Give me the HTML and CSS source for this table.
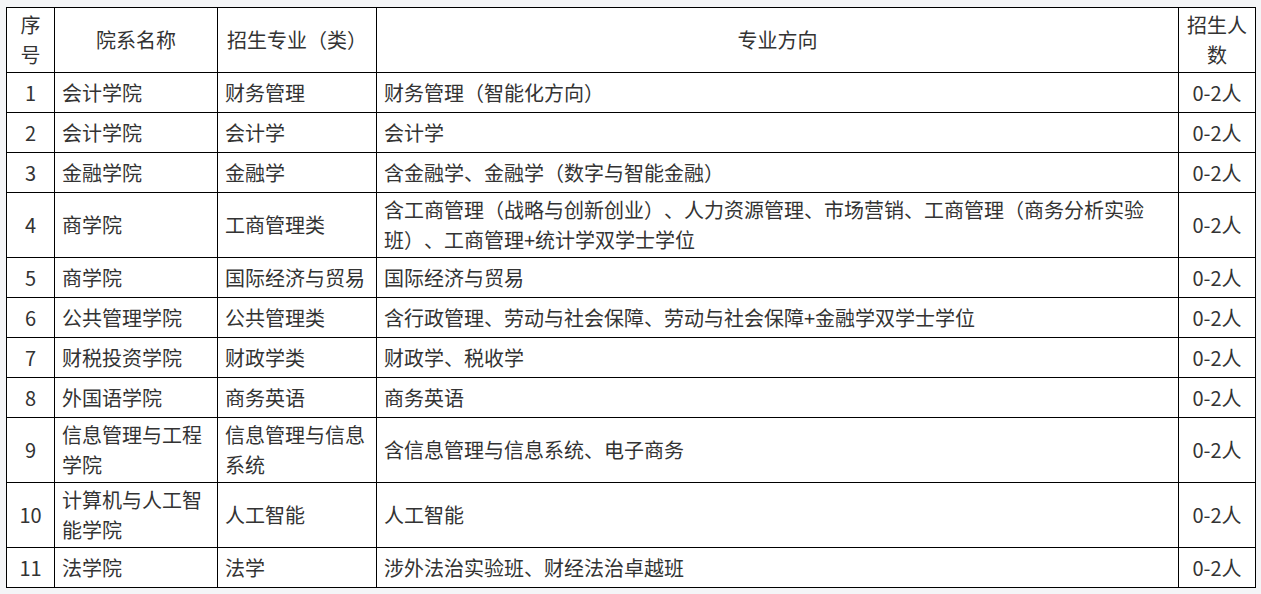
FILE: index.html
```html
<!DOCTYPE html>
<html lang="zh-CN">
<head>
<meta charset="utf-8">
<title>招生计划</title>
<link rel="stylesheet" href="styles.css">
</head>
<body>
<div class="wrap">
<table class="plan">
  <colgroup>
    <col class="c-no"><col class="c-dept"><col class="c-major"><col class="c-dir"><col class="c-num">
  </colgroup>
  <thead>
    <tr>
      <th>序号</th>
      <th>院系名称</th>
      <th>招生专业（类）</th>
      <th>专业方向</th>
      <th>招生人数</th>
    </tr>
  </thead>
  <tbody>
    <tr><td class="no">1</td><td>会计学院</td><td>财务管理</td><td>财务管理（智能化方向）</td><td class="num">0-2人</td></tr>
    <tr><td class="no">2</td><td>会计学院</td><td>会计学</td><td>会计学</td><td class="num">0-2人</td></tr>
    <tr><td class="no">3</td><td>金融学院</td><td>金融学</td><td>含金融学、金融学（数字与智能金融）</td><td class="num">0-2人</td></tr>
    <tr><td class="no">4</td><td>商学院</td><td>工商管理类</td><td>含工商管理（战略与创新创业）、人力资源管理、市场营销、工商管理（商务分析实验班）、工商管理+统计学双学士学位</td><td class="num">0-2人</td></tr>
    <tr><td class="no">5</td><td>商学院</td><td>国际经济与贸易</td><td>国际经济与贸易</td><td class="num">0-2人</td></tr>
    <tr><td class="no">6</td><td>公共管理学院</td><td>公共管理类</td><td>含行政管理、劳动与社会保障、劳动与社会保障+金融学双学士学位</td><td class="num">0-2人</td></tr>
    <tr><td class="no">7</td><td>财税投资学院</td><td>财政学类</td><td>财政学、税收学</td><td class="num">0-2人</td></tr>
    <tr><td class="no">8</td><td>外国语学院</td><td>商务英语</td><td>商务英语</td><td class="num">0-2人</td></tr>
    <tr><td class="no">9</td><td>信息管理与工程学院</td><td>信息管理与信息系统</td><td>含信息管理与信息系统、电子商务</td><td class="num">0-2人</td></tr>
    <tr><td class="no">10</td><td>计算机与人工智能学院</td><td>人工智能</td><td>人工智能</td><td class="num">0-2人</td></tr>
    <tr><td class="no">11</td><td>法学院</td><td>法学</td><td>涉外法治实验班、财经法治卓越班</td><td class="num">0-2人</td></tr>
  </tbody>
</table>
</div>
</body>
</html>
```

FILE: styles.css
```css
html, body {
  margin: 0;
  padding: 0;
  background: #f4f5f7;
}
.wrap {
  padding: 7px 6px;
}
.plan {
  width: 1249px;
  table-layout: fixed;
  border-collapse: collapse;
  background: #fff;
  font-family: "Noto Sans CJK SC", "Noto Sans", sans-serif;
  font-size: 20px;
  line-height: 30px;
  color: #333;
  text-spacing-trim: space-all;
}
.c-no { width: 48px; }
.c-dept { width: 163px; }
.c-major { width: 159px; }
.c-dir { width: 802px; }
.c-num { width: 77px; }
.plan th,
.plan td {
  border: 1px solid #000;
  padding: 2px 7px;
  vertical-align: middle;
  word-break: break-all;
}
.plan th {
  font-weight: normal;
  text-align: center;
}
.plan td {
  height: 35px;
  text-align: left;
}
.plan td.no,
.plan td.num {
  text-align: center;
}
```
